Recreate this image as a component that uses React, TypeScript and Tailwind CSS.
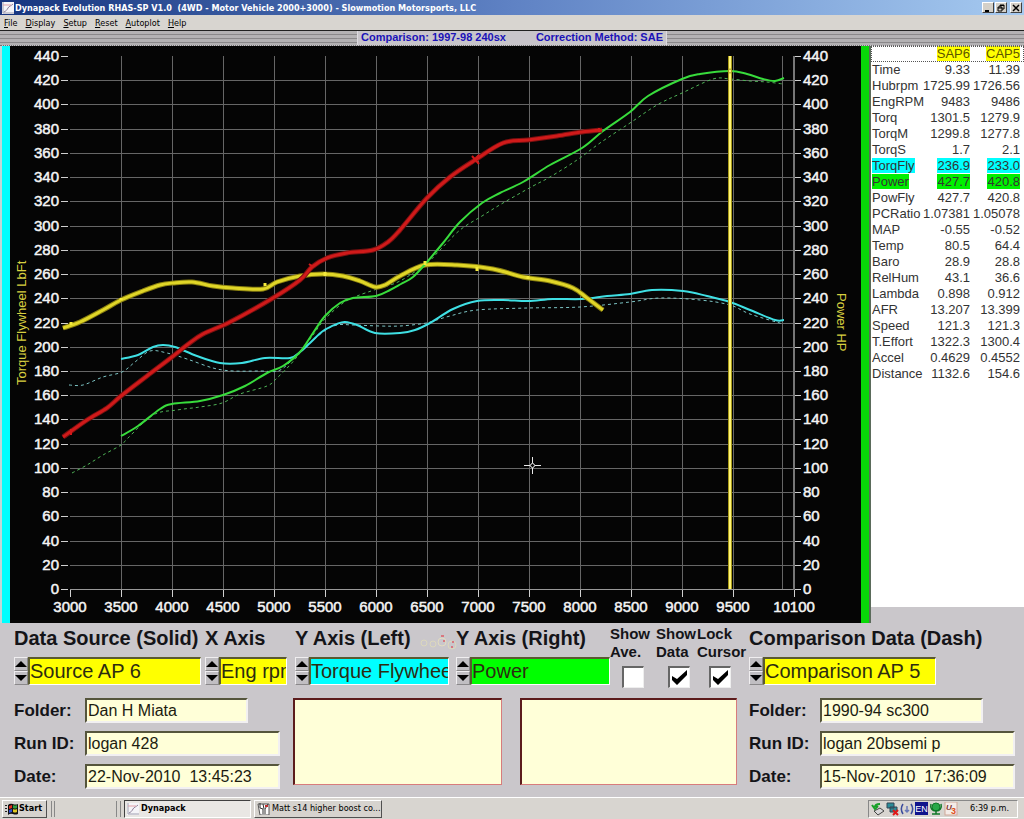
import React, { useState } from 'react';

type Point = [number, number];

// ---- chart data ----
const POWER_SOLID: Point[] = [
  [121, 436], [138, 426], [160, 409], [172, 404], [200, 401], [223, 395], [245, 386], [267, 373], [283, 366],
  [300, 352], [313, 333], [325, 316], [340, 303], [353, 298], [376, 296], [390, 290], [401, 284], [413, 277],
  [427, 262], [443, 243], [460, 222], [482, 203], [500, 193], [523, 182], [550, 165], [582, 148], [603, 131],
  [630, 112], [648, 96], [682, 79], [700, 74], [730, 71], [747, 74], [763, 79], [775, 81], [784, 78],
];
const POWER_DASH: Point[] = [
  [72, 473], [87, 465], [103, 455], [121, 445], [128, 438], [153, 415], [177, 410], [200, 407], [222, 403],
  [240, 394], [267, 386], [277, 378], [290, 365], [300, 353], [313, 335], [325, 319], [343, 303], [357, 296],
  [377, 289], [400, 281], [427, 263], [440, 250], [460, 230], [482, 216], [503, 203], [533, 186], [550, 177],
  [577, 160], [600, 143], [630, 123], [657, 105], [682, 93], [713, 79], [730, 79], [750, 81], [767, 82], [783, 84],
];
const TORQUE_SOLID: Point[] = [
  [121, 359], [138, 355], [153, 347], [163, 345], [175, 347], [197, 356], [220, 363], [242, 363], [265, 358],
  [290, 358], [300, 352], [310, 343], [323, 331], [337, 324], [345, 322], [357, 325], [375, 333], [400, 333],
  [415, 330], [430, 323], [453, 309], [477, 301], [503, 300], [528, 301], [553, 299], [582, 299], [607, 296],
  [630, 294], [652, 290], [683, 291], [707, 296], [730, 302], [750, 310], [775, 320], [784, 320],
];
const TORQUE_DASH: Point[] = [
  [69, 385], [83, 385], [103, 377], [122, 372], [135, 362], [150, 351], [167, 353], [187, 359], [213, 368],
  [233, 371], [260, 371], [278, 371], [290, 362], [300, 352], [323, 332], [337, 325], [353, 325], [380, 326],
  [400, 326], [420, 324], [430, 322], [450, 316], [477, 310], [528, 308], [580, 307], [630, 302], [660, 298],
  [700, 300], [730, 305], [750, 314], [783, 324],
];
const YELLOW_PEN: Point[] = [
  [63, 328], [80, 322], [103, 310], [121, 300], [143, 291], [160, 285], [173, 283], [192, 282], [213, 286],
  [233, 288], [263, 289], [277, 282], [300, 276], [323, 274], [343, 276], [360, 281], [375, 287], [385, 285],
  [400, 276], [425, 265], [457, 265], [493, 269], [523, 277], [550, 281], [573, 288], [587, 298], [603, 310],
];
const RED_PEN: Point[] = [
  [63, 437], [87, 420], [107, 408], [121, 396], [147, 376], [172, 357], [187, 345], [203, 334], [230, 322],
  [273, 298], [300, 280], [312, 267], [327, 258], [347, 253], [373, 250], [388, 242], [400, 230], [427, 198],
  [450, 177], [475, 160], [503, 143], [528, 140], [557, 136], [582, 132], [602, 130],
];

const Y_VALUES = Array.from({ length: 23 }, (_, i) => i * 20);
const X_VALUES = [3000, 3500, 4000, 4500, 5000, 5500, 6000, 6500, 7000, 7500, 8000, 8500, 9000, 9500, 10000, 10100];

const yPos = (v: number) => Math.round(589 - (v * 533) / 440);
const xPos = (v: number) => (v === 10100 ? 794 : Math.round(70 + ((v - 3000) * 51) / 500) - (v === 10000 ? 2 : 0));

// smooth line through all the points
function curve(pts: Point[]) {
  let d = `M${pts[0][0]} ${pts[0][1]}`;
  for (let i = 0; i < pts.length - 1; i++) {
    const p0 = pts[i - 1] || pts[i];
    const p1 = pts[i];
    const p2 = pts[i + 1];
    const p3 = pts[i + 2] || p2;
    d += `C${p1[0] + (p2[0] - p0[0]) / 6} ${p1[1] + (p2[1] - p0[1]) / 6} ${p2[0] - (p3[0] - p1[0]) / 6} ${p2[1] - (p3[1] - p1[1]) / 6} ${p2[0]} ${p2[1]}`;
  }
  return d;
}

// ---- readout table ----
const READOUT: [string, string, string, string?][] = [
  ['Time', '9.33', '11.39'],
  ['Hubrpm', '1725.99', '1726.56'],
  ['EngRPM', '9483', '9486'],
  ['Torq', '1301.5', '1279.9'],
  ['TorqM', '1299.8', '1277.8'],
  ['TorqS', '1.7', '2.1'],
  ['TorqFly', '236.9', '233.0', 'bg-[#00ffff]'],
  ['Power', '427.7', '420.8', 'bg-[#00f000]'],
  ['PowFly', '427.7', '420.8'],
  ['PCRatio', '1.07381', '1.05078'],
  ['MAP', '-0.55', '-0.52'],
  ['Temp', '80.5', '64.4'],
  ['Baro', '28.9', '28.8'],
  ['RelHum', '43.1', '36.6'],
  ['Lambda', '0.898', '0.912'],
  ['AFR', '13.207', '13.399'],
  ['Speed', '121.3', '121.3'],
  ['T.Effort', '1322.3', '1300.4'],
  ['Accel', '0.4629', '0.4552'],
  ['Distance', '1132.6', '154.6'],
];

const MENU = ['File', 'Display', 'Setup', 'Reset', 'Autoplot', 'Help'];

function ChartIcon({ className }: { className: string }) {
  return (
    <svg viewBox="0 0 12 12" className={className} aria-hidden="true">
      <rect width="12" height="12" fill="#f4f4f8" />
      <path d="M1 0v11h11" stroke="#a0a0b0" fill="none" />
      <path d="M2 10C4 9 5 8 6 6s3-2 5-4" stroke="#8d7f9a" fill="none" />
      <path d="M1 3h8" stroke="#e0a0a8" fill="none" />
    </svg>
  );
}

function TitleBar() {
  const btn =
    'flex h-[11px] w-3 items-center justify-center border border-t-white border-l-white border-r-[#404040] border-b-[#404040] bg-[#d4d0c8]';
  return (
    <header className="flex h-[15px] items-center bg-gradient-to-r from-[#17357f] via-[#5f82c4] to-[#a6caf0] pl-0.5 pr-0.5">
      <ChartIcon className="h-3 w-3" />
      <h1 className="ml-px flex-1 whitespace-pre font-['DejaVu_Sans_Condensed',sans-serif] text-[9px] leading-[14px] font-bold text-white">
        {'Dynapack Evolution RHAS-SP V1.0  (4WD - Motor Vehicle 2000+3000) - Slowmotion Motorsports, LLC'}
      </h1>
      <div className="flex gap-px">
        <button className={btn} aria-label="Minimize">
          <svg viewBox="0 0 8 8" className="h-2 w-2"><path d="M1 7h4" stroke="#000" strokeWidth="2" /></svg>
        </button>
        <button className={btn} aria-label="Restore">
          <svg viewBox="0 0 8 8" className="h-2 w-2">
            <path d="M3 3V1h4v4H5M3 1.5h4" stroke="#000" fill="none" />
            <path d="M1 3h4v4H1zM1 4h4" stroke="#000" fill="none" />
          </svg>
        </button>
        <button className={btn + ' ml-0.5'} aria-label="Close">
          <svg viewBox="0 0 8 8" className="h-2 w-2"><path d="M1 1l6 6M7 1L1 7" stroke="#000" strokeWidth="1.5" /></svg>
        </button>
      </div>
    </header>
  );
}

function MenuBar() {
  return (
    <nav className="flex h-4 items-center gap-2 border-b border-[#202020] bg-[#d8d5d0] pl-1 font-['DejaVu_Sans_Condensed',sans-serif] text-[9px] leading-[14px] text-black">
      {MENU.map((item) => (
        <button key={item}>
          <span className="underline">{item[0]}</span>
          {item.slice(1)}
        </button>
      ))}
    </nav>
  );
}

function ComparisonStrip() {
  const stripes = 'flex-1 bg-[repeating-linear-gradient(180deg,#b4b2b4_0px,#b4b2b4_3px,#8a888a_3px,#8a888a_4px)]';
  return (
    <div className="flex h-[15px] border-b border-dotted border-[#707070] bg-[#c8c5ca]">
      <div className={stripes} />
      <div className="flex w-[310px] justify-between border-x border-[#dddbe0] px-[3px] text-[11px] leading-[12px] font-bold text-[#1a12b8]">
        <span>Comparison: 1997-98 240sx</span>
        <span>Correction Method: SAE</span>
      </div>
      <div className={stripes} />
    </div>
  );
}

function Chart() {
  return (
    <svg viewBox="10 46 851 577" className="block h-auto min-w-0 flex-1 bg-[#050505]" role="img" aria-label="Dyno run chart">
      <g shapeRendering="crispEdges" stroke="#666">
        {Y_VALUES.slice(1, -1).map((v) => (
          <path key={v} d={`M70 ${yPos(v) + 0.5}H794`} />
        ))}
        {X_VALUES.slice(1, -1).map((v) => (
          <path key={v} d={`M${xPos(v) + 0.5} 56V589`} />
        ))}
        <path d="M70 589.5H794" stroke="#999" />
        <path d="M794 56V590" stroke="#777" strokeWidth="2" />
      </g>
      <g shapeRendering="crispEdges" stroke="#d0d0d0">
        {Y_VALUES.map((v) => (
          <path key={v} d={`M61 ${yPos(v) + 0.5}H68M795 ${yPos(v) + 0.5}H801`} />
        ))}
        {X_VALUES.filter((v) => v !== 10000).map((v) => (
          <path key={v} d={`M${xPos(v) + 0.5} 590V597`} />
        ))}
      </g>

      <g fill="#f4f4f4" stroke="#f4f4f4" strokeWidth="0.5" fontSize="15" fontFamily="Liberation Sans, Arial, sans-serif">
        {Y_VALUES.map((v) => (
          <React.Fragment key={v}>
            <text x="59" y={yPos(v) + 5} textAnchor="end">{v}</text>
            <text x="803" y={yPos(v) + 5}>{v}</text>
          </React.Fragment>
        ))}
        {X_VALUES.filter((v) => v !== 10000).map((v) => (
          <text key={v} x={xPos(v)} y="612" textAnchor="middle">{v}</text>
        ))}
      </g>
      <g fill="#d8d040" fontSize="13" fontFamily="Liberation Sans, Arial, sans-serif">
        <text transform="translate(26 385) rotate(-90)">Torque Flywheel LbFt</text>
        <text transform="translate(837 293) rotate(90)">Power HP</text>
      </g>

      <g fill="none">
        <path d={curve(TORQUE_DASH)} stroke="#7cc4c4" strokeDasharray="3 3" />
        <path d={curve(POWER_DASH)} stroke="#4fb457" strokeDasharray="3 3" />
        <path d={curve(TORQUE_SOLID)} stroke="#3fe0e4" strokeWidth="2" />
        <path d={curve(YELLOW_PEN)} stroke="#8a8010" strokeWidth="5" />
        <path d={curve(YELLOW_PEN)} stroke="#e0d628" strokeWidth="3" />
        <path d={curve(POWER_SOLID)} stroke="#38dc3c" strokeWidth="2" />
        <path d={curve(RED_PEN)} stroke="#7a1010" strokeWidth="5" />
        <path d={curve(RED_PEN)} stroke="#d01a1a" strokeWidth="3" />
        {/* pen blobs */}
        <path d="M71 322v3M121 298v2M265 283v3M325 272v4M425 261v4M477 267v4M528 276v3" stroke="#f4ea3c" strokeWidth="3" />
        <path d="M71 429v6M309 264l4 3M472 156l7 8M479 155l-7 8M599 128v4" stroke="#d01a1a" strokeWidth="2" />
      </g>

      {/* cursor line */}
      <path d="M730 56V589" stroke="#a89a18" strokeWidth="4" />
      <path d="M730 56V589" stroke="#fff47a" strokeWidth="2" />
      <circle cx="730" cy="71" r="2" fill="none" stroke="#a8a020" />
      <g stroke="#e8e8e8" fill="none">
        <path d="M524 465.500H530M535 465.500H541M532.500 457V463M532.500 468V474" />
        <circle cx="532.500" cy="465.500" r="2" />
      </g>
    </svg>
  );
}

function Readout() {
  return (
    <aside className="w-[155px] shrink-0 border-l-2 border-[#5a6a5a] bg-[#cac7cb]">
      <table className="h-[561px] w-full table-fixed border-collapse bg-white text-[13px] leading-4 text-[#333]">
        <thead>
          <tr className="h-4 text-[#5c5400] outline-1 -outline-offset-1 outline-dotted outline-[#555]">
            <th className="w-[50px] p-0" aria-label="Channel" />
            <th className="w-[49px] p-0 text-right font-normal"><span className="bg-[#ffff00]">SAP6</span></th>
            <th className="p-0 pr-1 text-right font-normal"><span className="bg-[#ffff00]">CAP5</span></th>
          </tr>
        </thead>
        <tbody>
          {READOUT.map(([name, source, comp, mark]) => (
            <tr key={name} className="h-4">
              <th className="p-0 pl-px text-left font-normal whitespace-nowrap"><span className={mark}>{name}</span></th>
              <td className="p-0 text-right"><span className={mark}>{source}</span></td>
              <td className="p-0 pr-1 text-right"><span className={mark}>{comp}</span></td>
            </tr>
          ))}
          <tr><td colSpan={3} /></tr>
        </tbody>
      </table>
    </aside>
  );
}

function Ring({ label, value, width, color }: { label: string; value: string; width: string; color: string }) {
  const btn =
    'flex h-3.5 w-full items-center justify-center border border-t-[#f0eef0] border-l-[#f0eef0] border-r-[#8a888a] border-b-[#8a888a] bg-[#c0bec2]';
  return (
    <div className="min-w-0">
      <label className="block whitespace-nowrap text-xl leading-[30px] font-bold text-[#141418]">
        {label}
        <span className="mt-1 flex h-7">
          <span className="w-3.5 shrink-0">
            <button className={btn} aria-label={label + ' up'}>
              <svg viewBox="0 0 12 6" className="h-1.5 w-3"><path d="M6 0l6 6H0z" /></svg>
            </button>
            <button className={btn} aria-label={label + ' down'}>
              <svg viewBox="0 0 12 6" className="h-1.5 w-3"><path d="M0 0h12L6 6z" /></svg>
            </button>
          </span>
          <input
            readOnly
            value={value}
            aria-label={label}
            className={`${width} ${color} h-7 border-t-2 border-l-2 border-r border-b border-t-[#5a5a30] border-l-[#5a5a30] border-r-white border-b-white text-xl leading-6 font-normal text-[#2c2c10] outline-none`}
          />
        </span>
      </label>
    </div>
  );
}

function Tick({ label, checked, className }: { label: [string, string]; checked?: boolean; className: string }) {
  const [on, setOn] = useState(!!checked);
  return (
    <label className={`${className} flex flex-col text-[15px] leading-[18px] font-bold text-[#141418]`}>
      <span>{label[0]}</span>
      <span>{label[1]}</span>
      <span className="relative mt-[5px] ml-3 block h-[22px] w-[22px]">
        <input
          type="checkbox"
          checked={on}
          onChange={() => setOn(!on)}
          className="block h-[22px] w-[22px] appearance-none border-t-2 border-l-2 border-r border-b border-t-[#666] border-l-[#666] border-r-[#eee] border-b-[#eee] bg-white"
        />
        {on && (
          <svg viewBox="0 0 22 22" className="pointer-events-none absolute inset-0">
            <path d="M4 10v4l5 5L19 9V4L9 13z" fill="#000" />
          </svg>
        )}
      </span>
    </label>
  );
}

function Field({ label, value, short }: { label: string; value: string; short?: boolean }) {
  return (
    <label className="flex h-[25px] items-center text-[17px] font-bold text-[#141418]">
      <span className="w-[71px] shrink-0">{label}</span>
      <input
        readOnly
        value={value}
        className={`${short ? 'w-[163px]' : 'w-[195px]'} h-[25px] border-t-2 border-l-2 border-r-2 border-b-2 border-t-[#55553c] border-l-[#55553c] border-r-[#f2f0f2] border-b-[#f2f0f2] bg-[#ffffd8] pl-px text-base leading-5 font-normal text-[#1c1c10] outline-none`}
      />
    </label>
  );
}

function RunInfo({ folder, run, date }: { folder: string; run: string; date: string }) {
  return (
    <div className="flex flex-col gap-2">
      <Field label="Folder:" value={folder} short />
      <Field label="Run ID:" value={run} />
      <Field label="Date:" value={date} />
    </div>
  );
}

function Controls() {
  const memo =
    'h-[87px] w-full min-w-0 resize-none border-t-2 border-l-2 border-r border-b border-t-[#5c1c1c] border-l-[#5c1c1c] border-r-[#d87c7c] border-b-[#d87c7c] bg-[#ffffd8] outline-none';
  return (
    <section className="flex-1 bg-[#cac7cb] pl-3.5">
      <div className="grid grid-cols-[191fr_90fr_161fr_154fr_139fr_275fr]">
        <Ring label="Data Source (Solid)" value="Source AP 6" width="w-[173px]" color="bg-[#ffff00]" />
        <Ring label="X Axis" value="Eng rpm" width="w-[68px]" color="bg-[#ffff00]" />
        <div className="relative">
          <Ring label="Y Axis (Left)" value="Torque Flywheel" width="w-[140px]" color="bg-[#00ffff]" />
          {/* dirt specks on the panel */}
          <svg viewBox="0 0 38 20" className="pointer-events-none absolute top-2.5 left-[124px] h-5 w-[38px]" fill="none" aria-hidden="true">
            <circle cx="5" cy="10" r="3" stroke="#dcd8bc" />
            <circle cx="14" cy="11" r="3" stroke="#dcd8bc" />
            <circle cx="23" cy="9" r="4" stroke="#e2dcc0" />
            <circle cx="33" cy="12" r="4" stroke="#dcd8bc" />
            <path d="M22 3h3M24 8h2M33 9h2M32 14h2" stroke="#d87880" strokeWidth="2" />
          </svg>
        </div>
        <Ring label="Y Axis (Right)" value="Power" width="w-[140px]" color="bg-[#00ff00]" />
        <div className="flex pt-0.5">
          <Tick label={['Show', 'Ave.']} className="w-[46px]" />
          <Tick label={['Show', 'Data']} checked className="w-[41px]" />
          <Tick label={['Lock', 'Cursor']} checked className="w-[50px]" />
        </div>
        <Ring label="Comparison Data (Dash)" value="Comparison AP 5" width="w-[173px]" color="bg-[#ffff00]" />
      </div>
      <div className="mt-2.5 grid grid-cols-[279fr_444fr_287fr]">
        <RunInfo folder="Dan H Miata" run="logan 428" date="22-Nov-2010  13:45:23" />
        <div className="grid grid-cols-[209fr_217fr] gap-[18px]">
          <textarea readOnly aria-label="Source notes" className={memo} />
          <textarea readOnly aria-label="Comparison notes" className={memo} />
        </div>
        <div className="pl-3">
          <RunInfo folder="1990-94 sc300" run="logan 20bsemi p" date="15-Nov-2010  17:36:09" />
        </div>
      </div>
    </section>
  );
}

function TrayIcons() {
  return (
    <svg viewBox="0 0 88 14" className="h-3.5 w-[88px]" fill="none" aria-hidden="true">
      {/* safely remove hardware */}
      <path d="M3 9l6-3 4 3-6 4z" fill="#d8d8d8" stroke="#444" />
      <path d="M9 2C6 2 4 3 4 5M1 3l3 4 3-3" stroke="#18a028" strokeWidth="2" />
      {/* network, unplugged */}
      <path d="M16 1h7v5h-7zM19 5h7v5h-7z" fill="#2c8c98" stroke="#345" />
      <path d="M22 8l5 5M27 8l-5 5" stroke="#e01818" strokeWidth="2" />
      {/* wireless */}
      <path d="M32 2c-2 3-2 7 0 10M40 2c2 3 2 7 0 10" stroke="#3c4c9c" strokeWidth="1.500" />
      <path d="M36 4v5M34 8l2 2 2-2" stroke="#6878b8" strokeWidth="1.500" />
      {/* language */}
      <rect x="44" width="13" height="13" fill="#10148c" />
      <text x="50.500" y="10" textAnchor="middle" fill="#fff" fontSize="9" fontFamily="Liberation Sans, Arial, sans-serif">EN</text>
      {/* antivirus tree */}
      <circle cx="65" cy="5" r="4" fill="#28a848" stroke="#107828" />
      <path d="M60 2c-1 4 1 7 5 7s6-3 5-7M65 8v4M61 12h8" stroke="#107828" strokeWidth="1.500" />
      {/* U3 launchpad */}
      <rect x="74" width="12" height="13" fill="#f4ece8" stroke="#d0a898" />
      <text x="75" y="8" fill="#7a3030" fontSize="8" fontStyle="italic" fontWeight="bold" fontFamily="Liberation Sans, Arial, sans-serif">U</text>
      <text x="80" y="12" fill="#e05018" fontSize="9" fontWeight="bold" fontFamily="Liberation Sans, Arial, sans-serif">3</text>
    </svg>
  );
}

function Taskbar() {
  const raised = 'border border-t-white border-l-white border-r-[#505050] border-b-[#505050] bg-[#d6d3ce]';
  return (
    <footer className="flex h-[22px] items-center border-t border-white bg-[#d8d5d0] px-0.5 font-['DejaVu_Sans_Condensed',sans-serif] text-[9px] text-black">
      <button className={raised + ' flex h-[18px] w-[45px] items-center gap-px pl-0.5 font-bold'}>
        <svg viewBox="0 0 13 12" className="h-3 w-[13px]" aria-hidden="true">
          <path d="M0 2h2v1H0zM0 5h2v1H0zM0 8h2v1H0z" fill="#222" />
          <path d="M3 2q2-2 5-1v10q-3-1-5 1zM8 1q2 1 5 0v10q-3 1-5 0z" fill="#111" />
          <path d="M4 3l3-1v3l-3 1z" fill="#e03020" />
          <path d="M8 2q2 1 4 0v3q-2 1-4 0z" fill="#30a040" />
          <path d="M4 7l3-1v3l-3 1z" fill="#3050d0" />
          <path d="M8 6q2 1 4 0v3q-2 1-4 0z" fill="#e0c820" />
        </svg>
        Start
      </button>
      <div className="ml-1 h-4 w-px bg-[#888]" />
      <div className="ml-0.5 h-4 w-px bg-[#888]" />
      <div className="ml-[61px] h-4 w-px bg-[#888]" />
      <div className="ml-[3px] h-4 w-px bg-[#888]" />
      <button className="ml-[3px] flex h-[18px] w-[127px] items-center gap-0.5 border border-t-[#404040] border-l-[#404040] border-r-white border-b-white bg-[#e9e7e4] pl-0.5 font-bold">
        <ChartIcon className="h-3 w-3" />
        Dynapack
      </button>
      <button className={raised + ' ml-[3px] flex h-[18px] w-32 items-center gap-0.5 pl-0.5 whitespace-nowrap'}>
        <svg viewBox="0 0 13 12" className="h-3 w-[13px]" aria-hidden="true">
          <path d="M1 1h11v11H3z" fill="#fff" stroke="#555" />
          <path d="M3 0v5l3 1v5M11 1L8 6v5M6 1l1 5" stroke="#333" fill="none" />
          <path d="M8 2h3v2H8z" fill="#c03030" />
        </svg>
        Matt s14 higher boost co...
      </button>
      <div className="mr-1 ml-auto flex h-[18px] w-[150px] items-center justify-between border border-t-[#888] border-l-[#888] border-r-white border-b-white pr-2 pl-0.5">
        <TrayIcons />
        <span>6:39 p.m.</span>
      </div>
    </footer>
  );
}

export default function App() {
  return (
    <div className="flex min-h-screen flex-col bg-[#cac7cb] font-['Liberation_Sans',Arial,sans-serif]">
      <TitleBar />
      <MenuBar />
      <ComparisonStrip />
      <main className="flex">
        <div className="w-2.5 shrink-0 border-l-2 border-[#c0d8d8] bg-[#00ffff]" />
        <Chart />
        <div className="w-2 shrink-0 bg-[#08d808]" />
        <Readout />
      </main>
      <Controls />
      <Taskbar />
    </div>
  );
}
